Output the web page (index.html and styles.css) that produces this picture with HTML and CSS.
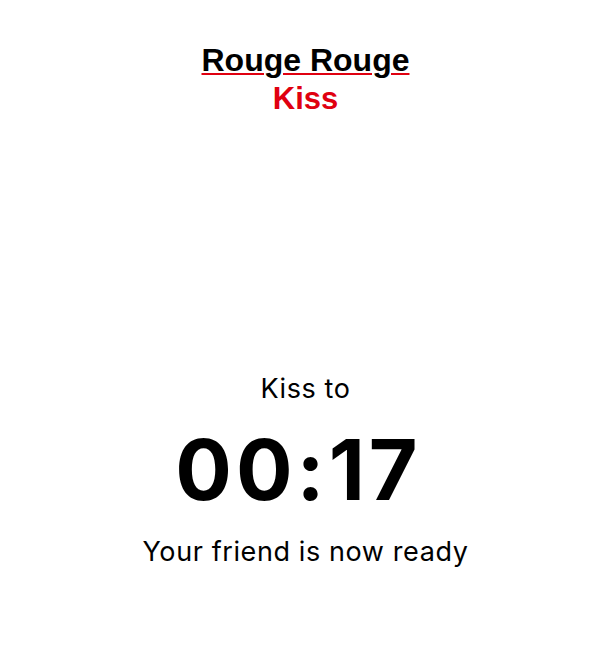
FILE: index.html
```html
<!DOCTYPE html>
<html>
<head>
<meta charset="utf-8">
<link rel="stylesheet" href="styles.css">
</head>
<body>
<main class="app">
  <header class="brand">
    <div class="brand-top">Rouge Rouge</div>
    <div class="brand-bottom">Kiss</div>
  </header>
  <section class="countdown">
    <div class="label">Kiss to</div>
    <div class="timer">00:17</div>
    <div class="status">Your friend is now ready</div>
  </section>
</main>
</body>
</html>
```

FILE: styles.css
```css
html, body {
  margin: 0;
  padding: 0;
  background: #ffffff;
}
.app {
  width: 611px;
  height: 665px;
  display: flex;
  flex-direction: column;
  align-items: center;
  font-family: "Liberation Sans", Arial, sans-serif;
  color: #000;
}
.brand {
  margin-top: 42px;
  display: flex;
  flex-direction: column;
  align-items: center;
  font-weight: bold;
}
.brand-top {
  font-size: 32px;
  line-height: 36px;
  text-decoration: underline;
  text-decoration-color: #e00010;
  text-decoration-thickness: 2px;
  text-underline-offset: 2px;
  text-decoration-skip-ink: auto;
}
.brand-bottom {
  margin-top: 4px;
  font-size: 31px;
  line-height: 34px;
  color: #e00010;
}
.countdown {
  margin-top: auto;
  margin-bottom: 97px;
  display: flex;
  flex-direction: column;
  align-items: center;
  font-family: Inter, "Liberation Sans", sans-serif;
}
.label, .status {
  font-size: 27px;
  line-height: 32px;
  letter-spacing: 0.6px;
}
.timer {
  margin-top: 15px;
  margin-bottom: 16px;
  padding-right: 14px;
  font-size: 84px;
  font-weight: bold;
  line-height: 100px;
  letter-spacing: 4px;
}
```
